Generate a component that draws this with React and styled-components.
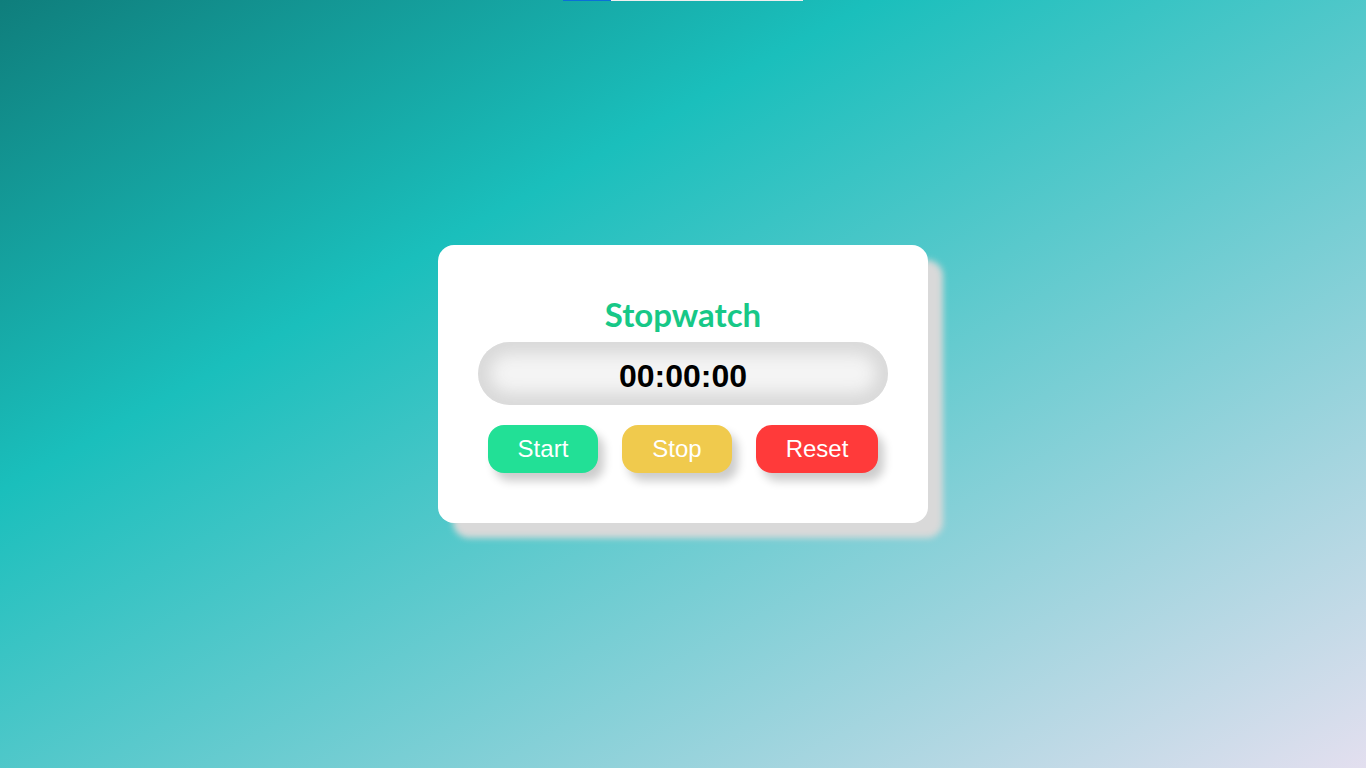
import React, { useState, useEffect, useRef } from "react";
import styled, { createGlobalStyle } from "styled-components";

const GlobalStyle = createGlobalStyle`
  html, body {
    margin: 0;
    padding: 0;
  }
  body {
    font-family: "Liberation Sans", Arial, sans-serif;
  }
`;

const Page = styled.div`
  position: relative;
  min-height: 100vh;
  display: flex;
  justify-content: center;
  align-items: center;
  background: linear-gradient(
    to bottom right,
    #0f7e7c 0%,
    #1abfbc 32%,
    #e3dfef 100%
  );
`;

const TopProgress = styled.div`
  position: absolute;
  top: 0;
  left: 50%;
  transform: translateX(-50%);
  width: 240px;
  height: 1px;
  background: #efefef;
  overflow: hidden;
`;

const TopProgressFill = styled.div`
  height: 100%;
  background: #0a6fd8;
`;

const Card = styled.div`
  width: 490px;
  box-sizing: border-box;
  padding: 52px 40px 50px;
  display: flex;
  flex-direction: column;
  align-items: center;
  background-color: #fff;
  border-radius: 16px;
  box-shadow: 15px 15px 6px #d9d9d9;
`;

const Title = styled.h1`
  margin: 0 0 11px;
  font-family: "Lato", "Open Sans", sans-serif;
  font-weight: 700;
  font-size: 33px;
  line-height: 34px;
  color: #17c887;
`;

const Display = styled.div`
  width: 100%;
  height: 63px;
  box-sizing: border-box;
  padding-top: 5px;
  display: flex;
  justify-content: center;
  align-items: center;
  border-radius: 32px;
  background-color: #f4f4f4;
  box-shadow: inset 0 0 16px 12px #d9d9d9;
  font-family: "Liberation Sans", Arial, sans-serif;
  font-weight: 700;
  font-size: 32px;
  color: #000;
`;

const Buttons = styled.div`
  margin-top: 20px;
  display: flex;
  gap: 24px;
`;

const Button = styled.button`
  height: 48px;
  padding: 0 30px;
  border: none;
  outline: none;
  border-radius: 16px;
  background-color: ${props => props.color};
  color: #fff;
  font-family: "Liberation Sans", Arial, sans-serif;
  font-size: 24px;
  cursor: pointer;
  box-shadow: 6px 8px 10px rgba(0, 0, 0, 0.2);
`;

const pad = n => String(n).padStart(2, "0");

export default function App() {
  const [time, setTime] = useState(0);
  const [running, setRunning] = useState(false);
  const timer = useRef(null);

  useEffect(() => {
    if (running) {
      timer.current = setInterval(() => setTime(t => t + 1), 10);
    }
    return () => clearInterval(timer.current);
  }, [running]);

  const minutes = Math.floor(time / 6000);
  const seconds = Math.floor((time / 100) % 60);
  const hundredths = time % 100;

  return (
    <Page>
      <GlobalStyle />
      <TopProgress>
        <TopProgressFill style={{ width: "20%" }} />
      </TopProgress>
      <Card>
        <Title>Stopwatch</Title>
        <Display>
          {pad(minutes)}:{pad(seconds)}:{pad(hundredths)}
        </Display>
        <Buttons>
          <Button color="#22e096" onClick={() => setRunning(true)}>
            Start
          </Button>
          <Button color="#f0ca4d" onClick={() => setRunning(false)}>
            Stop
          </Button>
          <Button
            color="#ff3a3a"
            onClick={() => {
              setRunning(false);
              setTime(0);
            }}
          >
            Reset
          </Button>
        </Buttons>
      </Card>
    </Page>
  );
}
